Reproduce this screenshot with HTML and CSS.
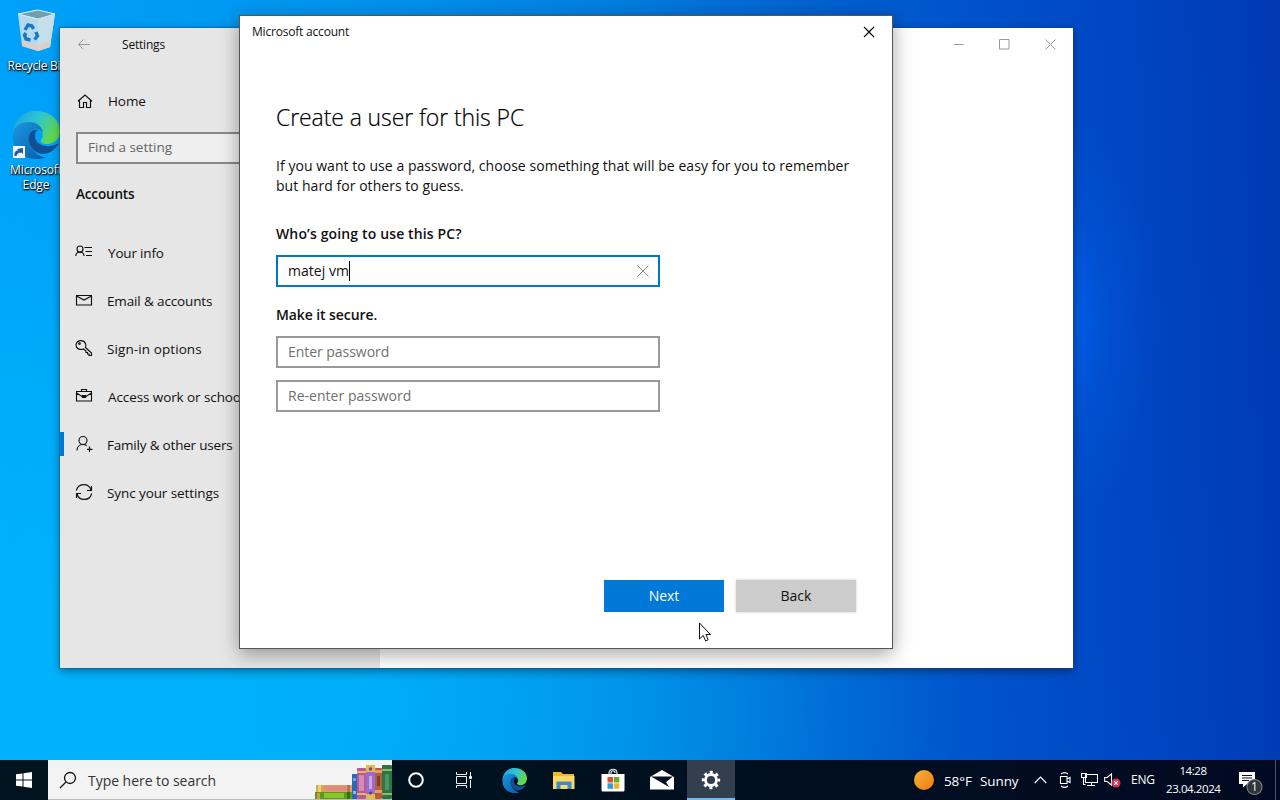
FILE: index.html
```html
<!DOCTYPE html>
<html lang="en">
<head>
<meta charset="utf-8">
<title>Settings</title>
<link rel="stylesheet" href="styles.css">
</head>
<body>
<main class="desktop">
  <div class="shortcuts">
    <div class="shortcut">
      <svg width="48" height="48" viewBox="0 0 48 48">
        <path d="M6 7 23 3l20 4-5 33-12 4-16-5z" fill="#b4d9ed"/>
        <path d="M6 7l20 5 17-5-17-4z" fill="#6f9fae"/>
        <path d="M6 7l20 5 17-5-17-4z" fill="none" stroke="#dceff8"/>
        <path d="M26 12l17-5-5 33-12 4z" fill="#c4dfea"/>
        <path d="M10 34l16 4v6l-16-5zM26 38l13-4-1 6-12 4z" fill="#dccfc7"/>
        <g fill="none" stroke="#1679c8" stroke-width="3.400"><path d="M13 23l3-5 4 1 1.500 3M24 25l1.500 4-3 3.500M18.500 33l-4.500-1-1.500-4 1.500-2"/></g>
      </svg>
      <span class="label recycle">Recycle Bin</span>
    </div>
    <div class="shortcut">
      <svg width="48" height="48" viewBox="0 0 48 48">
        <use href="#edge"/>
        <path d="M1 35h12v12H1z" fill="#f4f8fc"/><path d="M2.500 45c-.5-4 1.500-6 4-5.500L5 38l6-1v6l-1.700-1.500C7 41.500 5 42.500 4.500 45z" fill="#1e5aa8"/>
      </svg>
      <span class="label edge-label">Microsoft<br>Edge</span>
    </div>
  </div>

  <section class="window settings">
    <aside class="side">
      <header class="side-title">
        <svg width="14" height="12" viewBox="0 0 14 12" class="back"><path d="M13 5.500H1.500M6.500.5l-5 5 5 5"/></svg>
        <span>Settings</span>
      </header>
      <div class="item home"><svg width="18" height="18" viewBox="0 0 18 18"><path d="M2 9.200 9 3l7 6.200M3.500 8v7.500h4v-5h3v5h4V8"/></svg><span>Home</span></div>
      <div class="find">Find a setting</div>
      <h2 class="group">Accounts</h2>
      <nav>
        <div class="item info"><svg width="18" height="18" viewBox="0 0 18 18"><circle cx="5" cy="6" r="3"/><path d="M.8 13c0-5 8.200-5 8.200 0M9.500 4.500H17M10.500 8.500H17M11 12.500h6"/></svg><span>Your info</span></div>
        <div class="item mail"><svg width="18" height="18" viewBox="0 0 18 18"><path d="M1.500 4.500h15v9.500h-15zM1.500 5 9 9 16.500 5"/></svg><span>Email &amp; accounts</span></div>
        <div class="item sign"><svg width="18" height="18" viewBox="0 0 18 18"><path d="M10.500 8.500 16.500 14v2.500H14V15h-1.500v-1.500H11V12L8.500 10C5 11.500 1 9.500 1 6a5 5 0 0 1 9.500-1.500c.6 1.500.5 2.800 0 4z"/><circle cx="4.500" cy="4.500" r=".8"/></svg><span>Sign-in options</span></div>
        <div class="item work"><svg width="18" height="18" viewBox="0 0 18 18"><path d="M1.500 4.500h15v9.500h-15zM6.500 4.500V2.500h5v2M1.500 6l5.500 3.500h4L16.500 6M7.500 8.500h3v2h-3z"/></svg><span>Access work or school</span></div>
        <div class="item family active"><svg width="18" height="18" viewBox="0 0 18 18"><circle cx="8" cy="5.500" r="4"/><path d="M2 15.500c0-3.500 2.500-6 6-6 1.500 0 2.700.5 3.700 1.300M14.500 11.500v5.500M12 14.300h5.500"/></svg><span>Family &amp; other users</span></div>
        <div class="item sync"><svg width="18" height="18" viewBox="0 0 18 18"><path d="M1.300 7.500A7.600 7.600 0 0 1 16 7M16.500 3v4.500H12M16.700 10.500A7.600 7.600 0 0 1 2 11M1.500 15v-4.500H6"/></svg><span>Sync your settings</span></div>
      </nav>
    </aside>
    <div class="content">
      <div class="controls">
        <svg width="11" height="11" viewBox="0 0 11 11"><path d="M1 5.500h9.500"/></svg>
        <svg width="11" height="11" viewBox="0 0 11 11"><path d="M.5.5h9.500v9.500H.5z"/></svg>
        <svg width="11" height="11" viewBox="0 0 11 11"><path d="M.5.5l10 10M10.500.5l-10 10"/></svg>
      </div>
    </div>
  </section>

  <section class="window dialog">
    <header class="dialog-title"><span>Microsoft account</span>
      <svg width="12" height="12" viewBox="0 0 12 12"><path d="M1 1l10 10M11 1 1 11"/></svg></header>
    <div class="dialog-body">
      <h1>Create a user for this PC</h1>
      <p>If you want to use a password, choose something that will be easy for you to remember<br>but hard for others to guess.</p>
      <h3 class="first">Who’s going to use this PC?</h3>
      <div class="field focus"><span>matej vm</span><i class="caret"></i><svg width="12" height="12" viewBox="0 0 12 12"><path d="M.5.5l11 11M11.500.5l-11 11"/></svg></div>
      <h3 class="second">Make it secure.</h3>
      <div class="field">Enter password</div>
      <div class="field again">Re-enter password</div>
    </div>
    <footer class="actions"><div class="btn primary">Next</div><div class="btn">Back</div></footer>
  </section>

  <svg class="cursor" width="13" height="20" viewBox="0 0 13 20"><path d="M1.500 1v16l3.700-3.500L7.700 19l2.400-1.200L8 12.500h4.500z" fill="#fff" stroke="#111"/></svg>
</main>

<footer class="taskbar">
  <div class="start"><svg width="16" height="16" viewBox="0 0 16 16"><path d="M0 2.300 6.500 1.400v6.100H0zM7.500 1.200 16 0v7.500H7.500zM0 8.500h6.500v6.100L0 13.700zM7.500 8.500H16V16l-8.500-1.200z" fill="#fff"/></svg></div>
  <div class="search">
    <svg width="18" height="18" viewBox="0 0 18 18"><circle cx="11" cy="7" r="5.500"/><path d="M7 11 1 17"/></svg>
    <span>Type here to search</span>
    <svg class="books" width="77" height="35" viewBox="0 0 77 35">
      <rect x="1" y="21" width="37" height="7" rx="1" fill="#d9a55a"/><rect x="9" y="22" width="22" height="5" fill="#e08a82"/><rect x="3" y="21" width="3" height="7" fill="#f0d070"/><rect x="32" y="21" width="3" height="7" fill="#c9685c"/>
      <rect x="0" y="28" width="38" height="7" fill="#5c9a1e"/><rect x="9" y="29" width="20" height="5" fill="#8cc42c"/><rect x="2" y="29" width="3" height="6" fill="#c8a040"/><rect x="32" y="28" width="3" height="7" fill="#386c16"/>
      <rect x="37" y="10" width="5" height="25" fill="#2d68b8"/><rect x="38" y="14" width="3" height="3" fill="#69a5e8"/><rect x="38" y="27" width="3" height="3" fill="#8ab8ec"/>
      <rect x="42" y="4" width="9" height="31" rx="1" fill="#b35c94"/><rect x="44" y="11" width="5" height="16" fill="#d889b5"/><path d="M42 7h9v2h-9zM42 29h9v2h-9z" fill="#efb06d"/>
      <rect x="51" y="1" width="9" height="34" rx="1" fill="#9b6bd0"/><path d="M51 1h9v7h-9zM51 30h9v5h-9z" fill="#e7b84d"/><circle cx="55.500" cy="5" r="1.700" fill="#6d4698"/><rect x="54" y="12" width="3" height="13" fill="#c7a6e8"/><circle cx="55.500" cy="29" r="1.500" fill="#493f9b"/>
      <rect x="60" y="4" width="7" height="31" rx="1" fill="#b35f38"/><path d="M60 6h7v3h-7zM60 26h7v3h-7z" fill="#e99b61"/><rect x="62" y="12" width="3" height="10" fill="#78402f"/>
      <rect x="67" y="1" width="10" height="34" rx="1" fill="#2e7545"/><path d="M67 5h10v2H67zM67 29h10v2H67z" fill="#93b770"/><rect x="70" y="10" width="4" height="16" fill="#4c9562"/>
    </svg>
  </div>
  <div class="apps">
    <div class="app"><svg width="18" height="18" viewBox="0 0 18 18"><circle cx="9" cy="9" r="6.800" fill="none" stroke="#fff" stroke-width="2"/></svg></div>
    <div class="app"><svg width="18" height="18" viewBox="0 0 18 18" fill="none" stroke="#e8eef2"><path d="M1.500 1v2.500h10V1M1.500 17v-2.500h10V17M1.500 5.500h10v7h-10zM15.500 1v4M15.500 9v8"/><path d="M14.500 5.500h2v2h-2z" fill="#fff"/></svg></div>
    <div class="app gap"><svg width="25" height="25" viewBox="0 0 48 48">
      <defs>
        <linearGradient id="ga" x1="0" y1="0" x2="1" y2=".5"><stop offset="0" stop-color="#1b9de2"/><stop offset=".5" stop-color="#2cc4d4"/><stop offset="1" stop-color="#62d94c"/></linearGradient>
        <linearGradient id="gb" x1="0" y1="0" x2="1" y2="1"><stop offset="0" stop-color="#1b98e0"/><stop offset="1" stop-color="#0a56a8"/></linearGradient>
      </defs>
      <g id="edge"><path d="M1 23C2 8 12 0 24 0c14 0 24 9 24 20 0 8-6 13-13 13-5 0-7-2-6-4 5-5 0-13-9-13C10 16 2 19 1 23z" fill="url(#ga)"/><path d="M1 23C2 15 8 11 17 11c9 0 14 6 14 12-1-4-5-6-8-5-8 2-8 14-2 21 4 5 9 8 14 7-4 2-8 2-11 2C10 48 0 37 1 23z" fill="url(#gb)"/><path d="M18 22c-4 9 2 20 13 21 6 0 11-4 15-9 1-1 0-2-1-1-10 5-22 1-22-8 0-3 1-5 3-6-3-1-6 0-8 3z" fill="#124f93"/></g>
    </svg></div>
    <div class="app"><svg width="22" height="19" viewBox="0 0 22 19"><path d="M0 1h8l2 2h11v15H0z" fill="#f2b62b"/><path d="M0 5h21.500v13H0z" fill="#ffd766"/><path d="M3.500 18v-7.500h15V18h-4v-4h-7v4z" fill="#3e8cc5"/></svg></div>
    <div class="app"><svg width="24" height="24" viewBox="0 0 24 24"><path d="M8 7V5c0-5 8-5 8 0v2M10 7V5c0-3 4-3 4 0" fill="none" stroke="#e6ebee" stroke-width="1.200"/><path d="M.5 6h23v16c0 1-.5 1.500-1.500 1.500H2C1 23.500.5 23 .5 22z" fill="#fff"/><path d="M6.500 9H12v5.500H6.500z" fill="#d8502e"/><path d="M12.800 9h5.500v5.500h-5.500z" fill="#71a832"/><path d="M6.500 15.300H12v5.500H6.500z" fill="#289dd8"/><path d="M12.800 15.300h5.500v5.500h-5.500z" fill="#edb62a"/></svg></div>
    <div class="app"><svg width="24" height="20" viewBox="0 0 24 20"><path d="M0 7 12 0l12 7v12.500H0z" fill="#fff"/><path d="M1 6.500h22l-8 6.500 4 4z" fill="#04121d"/><path d="M13 12.500l6 4.500-3-5z" fill="#04121d"/></svg></div>
    <div class="app current"><svg width="20" height="20" viewBox="0 0 20 20"><g fill="none" stroke="#fff"><circle cx="10" cy="10" r="5.500" stroke-width="2.800"/><circle cx="10" cy="10" r="7.800" stroke-width="2.800" stroke-dasharray="3.060 3.066" stroke-dashoffset="1.530"/></g></svg></div>
  </div>
  <div class="tray">
    <div class="sun"></div>
    <span class="temp">58°F</span><span class="cond">Sunny</span>
    <svg class="chev" width="13" height="8" viewBox="0 0 13 8"><path d="M.7 7 6.500 1l5.800 6"/></svg>
    <svg class="meet" width="12" height="16" viewBox="0 0 12 16"><path d="M1.500 4.500h6.500v7H1.500zM8 7l3-1.500v5L8 9M2 2c2-1.600 5-1.600 7 0M2 14c2 1.600 5 1.600 7 0"/></svg>
    <svg class="net" width="17" height="16" viewBox="0 0 17 16"><path d="M4.500 2.500h12v8h-12zM10.500 10.500v3M6 13.500h8M.5 1.500h5v4h-5zM2.500 5.500v7h2"/></svg>
    <svg class="vol" width="17" height="16" viewBox="0 0 17 16"><path d="M.7 5.500h2.500L7.500 2v11L3.200 9.500H.7z"/><circle cx="12" cy="11" r="4.500" fill="#d9304c" stroke="none"/><path d="M10.200 9.200l3.600 3.600M13.800 9.200l-3.600 3.600"/></svg>
    <span class="lang">ENG</span>
    <div class="clock">14:28<br>23.04.2024</div>
    <div class="notice"><svg width="24" height="24" viewBox="0 0 24 24"><path d="M0 1h16v12H8l-4 3.500V13H0z" fill="#fff"/><path d="M3 4.500h10M3 7h10M3 9.500h7" stroke="#0a1424"/><circle cx="15.500" cy="16" r="7.500" fill="#30343b" stroke="#7d8188"/></svg><b>1</b></div>
    <i class="peek"></i>
  </div>
</footer>
</body>
</html>
```
FILE: styles.css
```css
* { box-sizing: border-box; }
body { margin: 0; width: 1280px; height: 800px; overflow: hidden; font: 13.500px/20px "Open Sans", "Noto Sans", sans-serif; color: #111; display: flex; flex-direction: column; }
h1, h2, h3, p { margin: 0; }
span, p { white-space: nowrap; }
svg { display: block; flex: none; }
.desktop { position: relative; height: 760px; flex: none; overflow: hidden;
  background:
    radial-gradient(ellipse 100px 210px at 1060px 320px, rgba(0,100,245,.75), rgba(0,100,245,.25) 50%, transparent),
    radial-gradient(ellipse 760px 620px at 200px 680px, rgba(0,188,255,.65) 20%, rgba(0,188,255,.3) 60%, transparent),
    linear-gradient(88deg, #00a2fa 0, #009cf4 14%, #0090ec 34%, #0080e0 48%, #0062d0 64%, #0050ca 78%, #0046c2 88%, #0039b2 100%); }
.shortcuts { position: absolute; left: 0; top: 7px; width: 72px; display: flex; flex-direction: column; gap: 28px; }
.shortcut { display: flex; flex-direction: column; align-items: center; height: 76px; }
.label { font-size: 12px; line-height: 15px; color: #fff; text-align: center; margin-top: 3px; text-shadow: 0 1px 2px #000, 1px 1px 1px #000; }
.recycle { letter-spacing: -.25px; margin-left: 3px; }
.edge-label { letter-spacing: -.128px; }

.window { position: absolute; }
.settings { left: 60px; top: 28px; width: 1013px; height: 640px; display: flex; background: #fff; box-shadow: 0 0 0 1px rgba(30,70,100,.4), 0 3px 9px rgba(0,0,0,.4); }
.side { width: 320px; background: #e6e6e6; }
.side-title { height: 33px; display: flex; align-items: center; gap: 31px; padding-left: 17px; font-size: 12px; letter-spacing: -.2px; }
.back { fill: none; stroke: #999; }
.item { height: 48px; display: flex; align-items: center; padding-left: 16px; gap: 13px; position: relative; }
.item svg { fill: none; stroke: #111; stroke-width: 1.150; margin: -2px -1px 0 -1px; }
.item span { margin-left: 2px; }
.home { margin-top: 16px; letter-spacing: -.089px; padding-left: 17px; }
.home svg { margin-top: -1px; }
.info { letter-spacing: -.17px; }
.mail { letter-spacing: -.14px; }
.sign { letter-spacing: .09px; }
.work { letter-spacing: -.09px; }
.family { letter-spacing: -.2px; }
.sync { letter-spacing: -.09px; }
.info span, .work span { margin-left: 3px; }
.find { margin: 7px 0 0 16px; width: 288px; height: 32px; border: 2px solid #888; background: #efefef; padding: 3px 10px; color: #666; line-height: 20px; }
.group { font-size: 13.500px; font-weight: 600; margin: 20px 0 0 16px; line-height: 20px; letter-spacing: -.15px; }
nav { margin-top: 25px; }
.item.active::before { content: ""; position: absolute; left: 0; top: 11px; width: 4px; height: 24px; background: #0078d7; }
.content { flex: 1; }
.controls { display: flex; justify-content: flex-end; gap: 35px; padding: 11px 17px 0 0; }
.controls svg { fill: none; stroke: #999; }

.dialog { left: 239px; top: 15px; width: 654px; height: 634px; background: #fff; border: 1px solid #555; box-shadow: 0 5px 18px rgba(0,0,0,.36); display: flex; flex-direction: column; }
.dialog-title { height: 32px; display: flex; align-items: center; justify-content: space-between; padding: 0 17px 0 12px; font-size: 12px; letter-spacing: -.2px; }
.dialog-title svg { fill: none; stroke: #000; stroke-width: 1.100; }
.dialog-body { padding: 53px 36px 0; flex: 1; }
h1 { font-size: 23px; font-weight: 300; line-height: 32px; letter-spacing: -.1px; color: #000; -webkit-text-stroke: .2px #000; }
p { margin-top: 23px; font-size: 14px; letter-spacing: .044px; }
h3 { font-size: 14px; font-weight: 600; margin-top: 28px; line-height: 20px; }
.first { letter-spacing: .14px; }
.second { margin-top: 18px; letter-spacing: -.09px; }
.field { width: 384px; height: 32px; border: 2px solid #999; padding: 0 10px; display: flex; align-items: center; margin-top: 12px; color: #707070; font-size: 14px; letter-spacing: -.04px; }
.again { letter-spacing: .03px; }
h3 + .field { margin-top: 11px; }
.focus { border-color: #0078c8; color: #111; letter-spacing: .02px; }
.caret { width: 1px; height: 20px; background: #000; }
.field svg { margin-left: auto; margin-right: -1px; fill: none; stroke: #888; }
.actions { display: flex; justify-content: flex-end; gap: 12px; padding: 0 36px 36px; }
.btn { width: 120px; height: 32px; background: #ccc; font-size: 14px; line-height: 32px; text-align: center; box-shadow: 0 0 3px #ccc; }
.primary { background: #0078d7; color: #fff; box-shadow: none; }
.cursor { position: absolute; left: 698px; top: 622px; }

.taskbar { height: 40px; flex: none; display: flex; background: linear-gradient(90deg, #00131e, #00101f 50%, #020a22); color: #fff; }
.start { width: 48px; display: grid; place-items: center; }
.search { width: 344px; background: #f3f3f3; display: flex; align-items: center; color: #333; font-size: 14px; padding-left: 11px; gap: 11px; border-bottom: 1px solid #bbb; }
.search span { padding-top: 2px; letter-spacing: -.04px; }
.search svg:not(.books) { fill: none; stroke: #111; stroke-width: 1.300; }
.books { margin-left: auto; align-self: flex-end; }
.apps { display: flex; gap: 1px; }
.app { width: 48px; display: grid; place-items: center; }
.app:nth-child(2) { margin-left: -1px; }
.app.gap { margin-left: 2px; }
.gap svg { margin-right: 2px; }
.current { background: #333f4c; border-bottom: 2px solid #76b9ed; }
.current svg { margin-top: 2px; }
.tray { margin-left: auto; width: 367px; display: flex; align-items: center; font-size: 13.500px; letter-spacing: -.1px; }
.tray svg { fill: none; stroke: #fff; stroke-width: 1.100; }
.sun { width: 20px; height: 20px; border-radius: 50%; background: linear-gradient(135deg, #efb332, #f47b17); margin-left: 1px; }
.temp { margin: 2px 0 0 10px; width: 36px; }
.cond { width: 54px; padding-top: 2px; }
.chev { width: 13px; }
.meet { margin-left: 12px; }
.net { margin-left: 10px; }
.vol { margin-left: 6px; }
.lang { margin-left: 10px; width: 36px; font-size: 12px; letter-spacing: -.25px; }
.clock { width: 54px; margin-left: -1px; font-size: 11.500px; line-height: 18px; text-align: center; white-space: nowrap; letter-spacing: -.42px; }
.notice { position: relative; width: 24px; height: 24px; margin: 6px 0 0 19px; }
.notice svg { stroke: none; }
.notice b { position: absolute; left: 12px; top: 8px; font: 12px/16px "Open Sans", sans-serif; }
.peek { width: 1px; height: 40px; background: #4a5468; margin-left: auto; margin-right: 4px; }
```
